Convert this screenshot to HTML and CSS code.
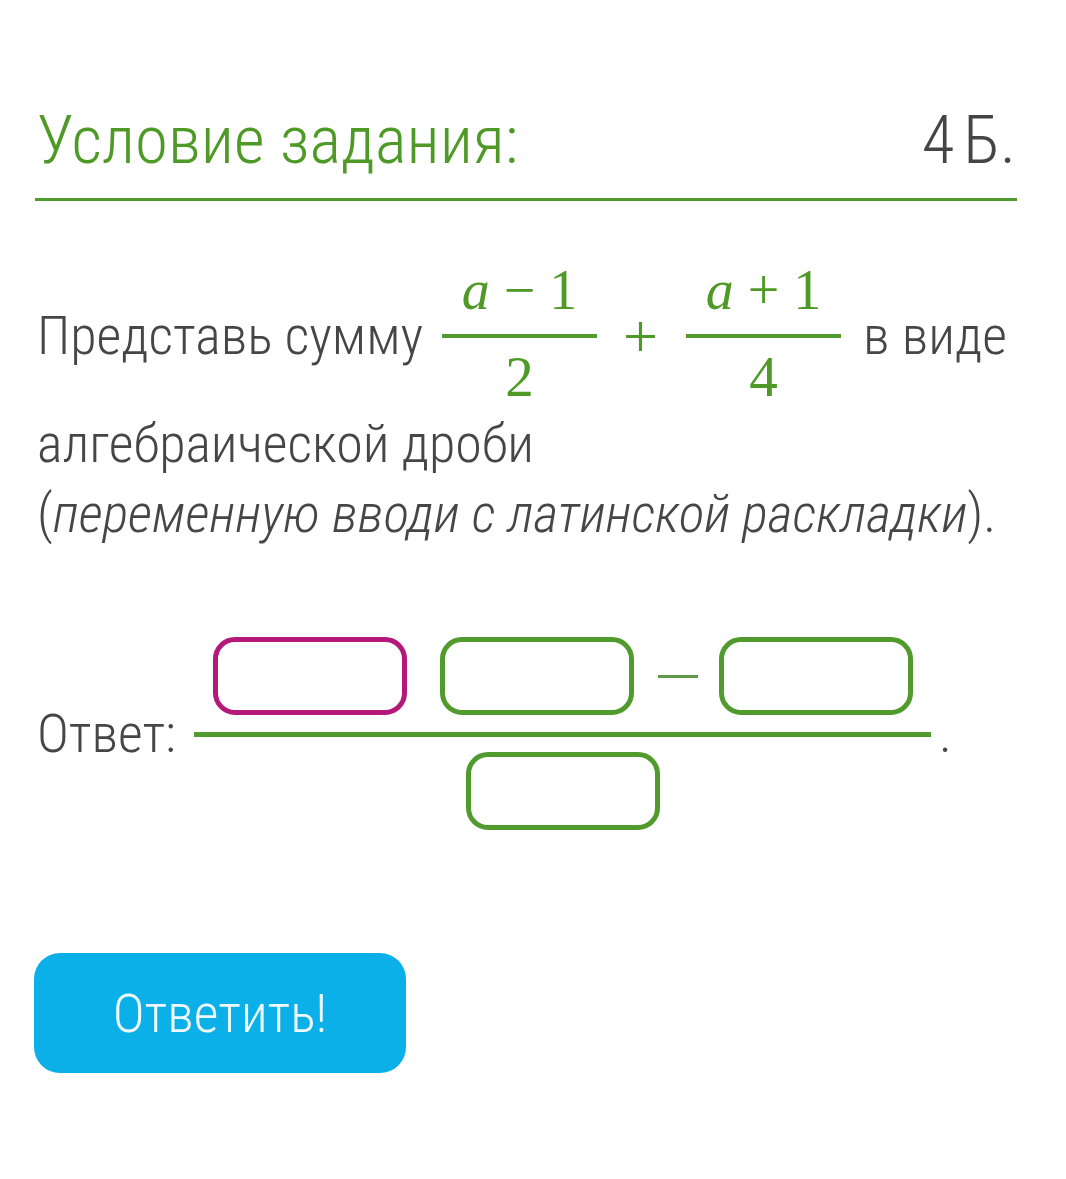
FILE: index.html
```html
<!DOCTYPE html>
<html lang="ru">
<head>
<meta charset="utf-8">
<link rel="stylesheet" href="styles.css">
</head>
<body>
<div class="page">
  <div class="header">
    <span class="title">Условие задания:</span>
    <span class="points">4 Б.</span>
  </div>
  <div class="task">
    <div class="line1">
      <span class="txt">Представь сумму</span>
      <span class="frac frac1"><span class="num"><i>a</i> − 1</span><span class="bar"></span><span class="den">2</span></span>
      <span class="op">+</span>
      <span class="frac frac2"><span class="num"><i>a</i> + 1</span><span class="bar"></span><span class="den">4</span></span>
      <span class="txt">в виде</span>
    </div>
    <div class="line2">алгебраической дроби</div>
    <div class="line3">(<em>переменную вводи с латинской раскладки</em>).</div>
  </div>
  <div class="answer">
    <span class="label">Ответ:</span>
    <div class="afrac">
      <div class="anum">
        <span class="box active"></span>
        <span class="box second"></span>
        <span class="minus"></span>
        <span class="box"></span>
      </div>
      <div class="abar"></div>
      <div class="aden"><span class="box"></span></div>
    </div>
    <span class="dot">.</span>
  </div>
  <button class="submit">Ответить!</button>
</div>
</body>
</html>
```
FILE: styles.css
```css
html, body { margin: 0; padding: 0; background: #fff; }
body { font-family: Roboto, "Noto Sans", sans-serif; font-weight: 300; font-stretch: 87.5%; color: #464646; }
.page { padding: 0 49px 0 35px; }
.header {
  display: flex; justify-content: space-between; align-items: baseline;
  padding: 102px 1px 20px 2px;
  border-bottom: 3px solid #519b2e;
}
.title { color: #4f9a27; font-size: 67px; line-height: 76px; }
.points { color: #454545; font-size: 67px; line-height: 76px; word-spacing: -6px; }
.task { padding-left: 2px; font-size: 54px; white-space: nowrap; }
.line1 { display: flex; align-items: center; margin-top: 60px; height: 150px; }
.txt { line-height: 64px; }
.frac { display: inline-flex; flex-direction: column; align-items: center; width: 155px; padding-bottom: 6px; font-family: "Liberation Serif", serif; font-weight: 400; font-stretch: normal; color: #4f9a27; }
.frac1 { margin-left: 19px; }
.frac2 { margin-left: 28px; margin-right: 22px; }
.op { margin-left: 26px; }
.frac .num { font-size: 56px; line-height: 60px; white-space: pre; }
.frac .bar { align-self: stretch; height: 4px; background: #519b2e; margin: 14px 0 10px; }
.frac .den { font-size: 57px; line-height: 58px; }
.op { font-family: "Liberation Serif", serif; font-stretch: normal; color: #4f9a27; font-size: 62px; font-weight: 400; line-height: 64px; }
.line2 { line-height: 70px; margin-top: -2px; }
.line3 { line-height: 70px; }
.answer { display: flex; align-items: center; margin-top: 88px; }
.label, .dot { font-size: 54px; line-height: 64px; }
.label { padding-left: 2px; }
.afrac { display: flex; flex-direction: column; align-items: center; margin-left: 18px; width: 737px; }
.anum { display: flex; align-items: center; }
.box { display: inline-block; width: 184px; height: 68px; border: 5px solid #519b2e; border-radius: 22px; }
.box.active { border-color: #b3187a; }
.box.second { margin-left: 33px; }
.minus { width: 40px; height: 3px; background: #5f9a47; margin: 0 21px 0 24px; }
.abar { align-self: stretch; height: 5px; background: #519b2e; margin: 17px 0 15px; }
.aden { display: flex; }
.dot { margin-left: 8px; }
.submit {
  display: block; margin-top: 123px; margin-left: -1px;
  width: 372px; height: 120px; border: none; border-radius: 26px;
  background: #0bb0e9; color: #eefaff;
  font-family: Roboto, sans-serif; font-weight: 300; font-stretch: 87.5%; font-size: 54px;
}
```
